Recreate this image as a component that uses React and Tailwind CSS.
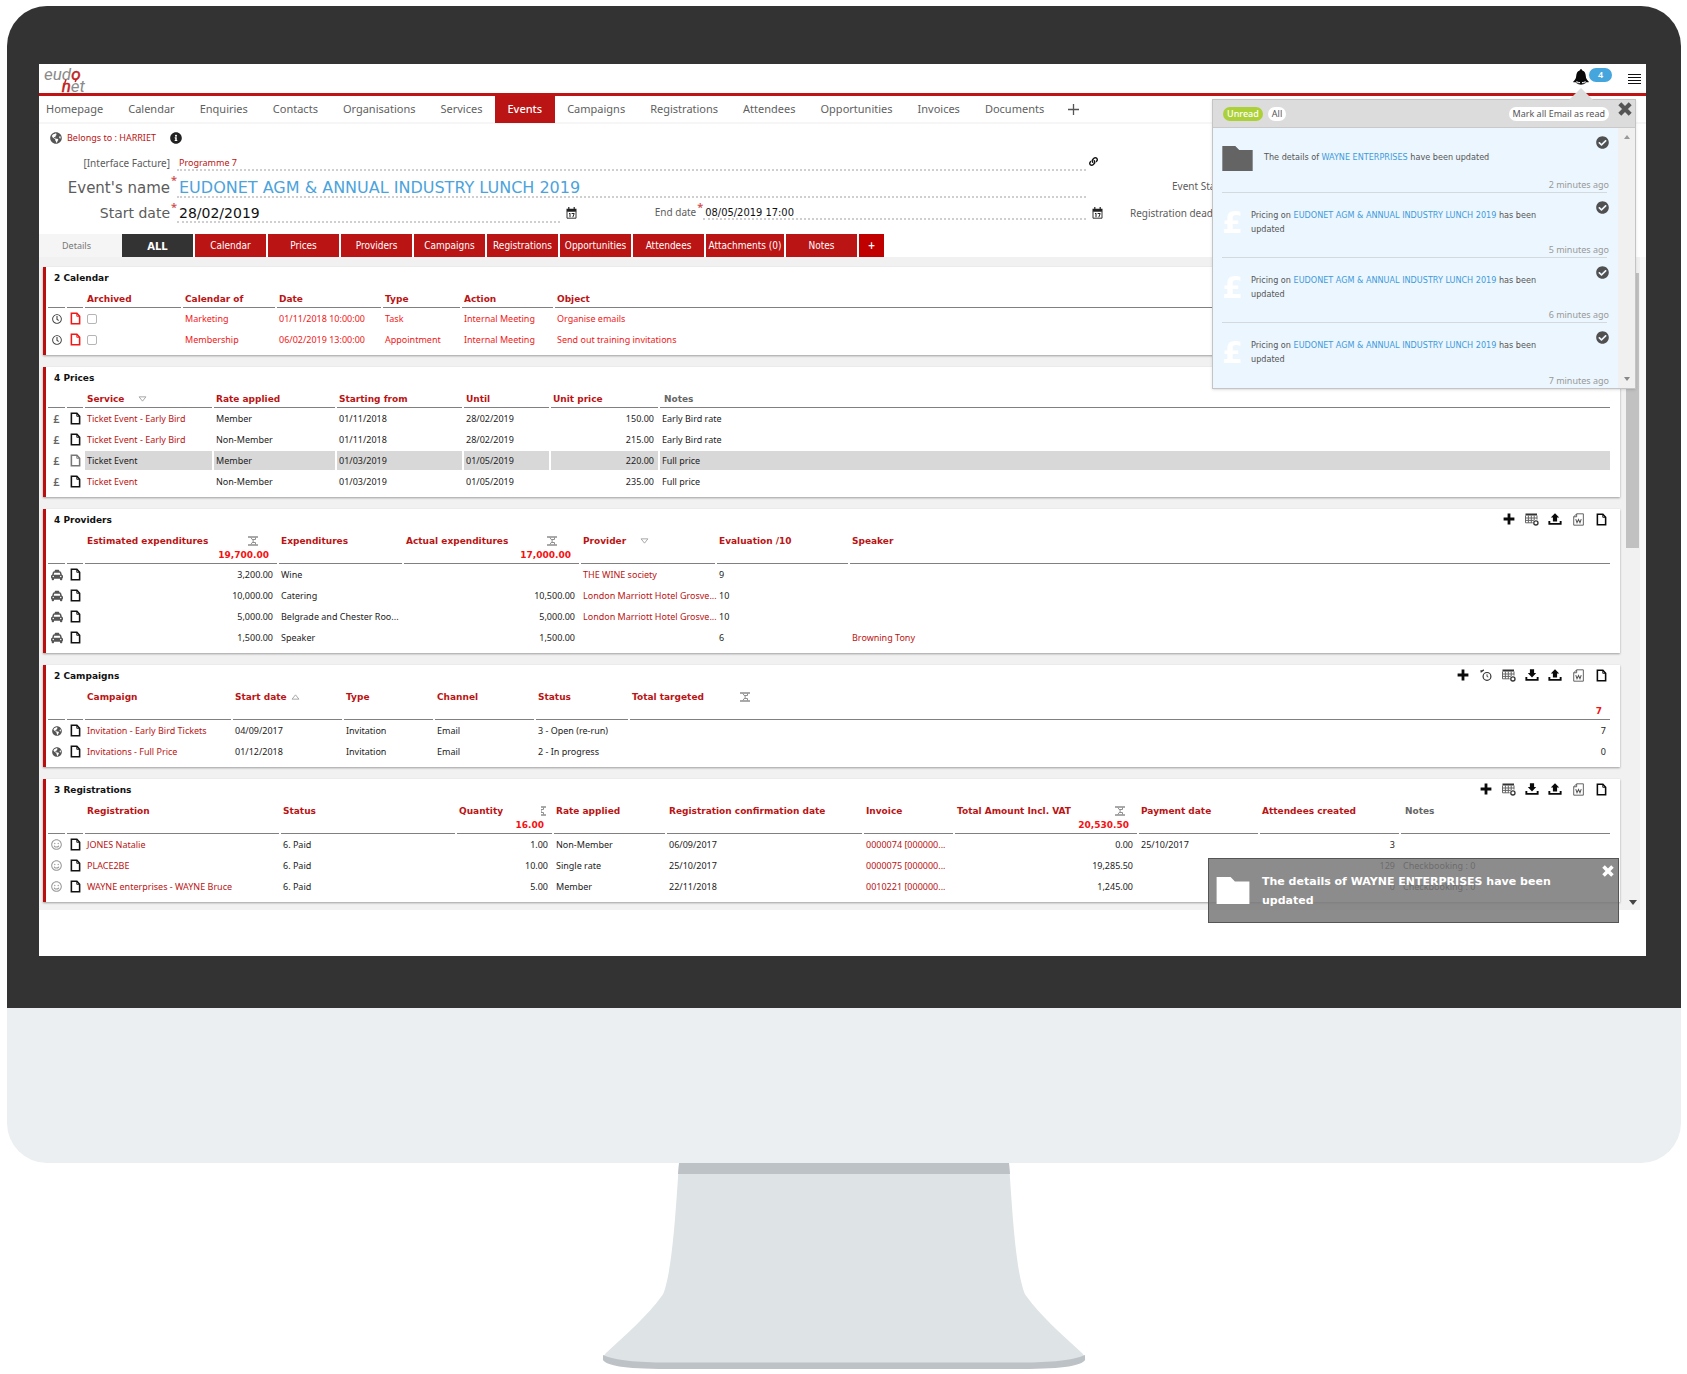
import React from "react";
import { FaCheckCircle, FaGlobeAmericas, FaInfoCircle, FaLink, FaRegClock, FaRegSmile, FaTaxi } from "react-icons/fa";

const BODY = "font-['Noto_Sans','DejaVu_Sans',sans-serif]";
const WIDE = "font-['DejaVu_Sans',sans-serif]";
const BOLD = "font-['DejaVu_Sans',sans-serif] font-bold";
const COND = "font-['DejaVu_Sans_Condensed','DejaVu_Sans',sans-serif]";

/* ---------- icons ---------- */

function FileIcon({ className = "" }) {
  return (
    <svg viewBox="0 0 12 14" className={"h-[13px] w-[11px] " + className} fill="none" stroke="currentColor" strokeWidth="1.7" aria-hidden="true">
      <path d="M1.5 1.2h6l3 3.4v8.2h-9z" />
      <path d="M7.4 1.2v3.4h3.1" strokeWidth="1" />
    </svg>
  );
}

function WordIcon() {
  return (
    <svg viewBox="0 0 12 14" className="h-[13px] w-[11px]" fill="none" stroke="#555" strokeWidth="1" aria-hidden="true">
      <path d="M4 .8h7.3v12.4H.8V4zM4 .8V4H.8" />
      <path d="M3 6.5l1.4 4L6 7l1.6 3.5L9 6.5" strokeWidth="1.1" />
    </svg>
  );
}

function PlusIcon() {
  return (
    <svg viewBox="0 0 12 12" className="size-3" fill="#0a0a0a" aria-hidden="true">
      <path d="M4.6 0.6h2.8v4h4v2.8h-4v4H4.6v-4h-4V4.6h4z" />
    </svg>
  );
}

function TableAddIcon() {
  return (
    <svg viewBox="0 0 14 13" className="h-[13px] w-[14px]" aria-hidden="true">
      <path d="M.5.5h11.5v2H.5z" fill="#333" />
      <path d="M.5 2.5v7.3h7.2M12 2.5v4M.5 5h11.5M.5 7.4h8.3M3.4 2.5v7.3M6.3 2.5v7.3M9.2 2.5v4.5" stroke="#666" strokeWidth="1" fill="none" />
      <circle cx="10.9" cy="9.9" r="2.1" fill="#fff" stroke="#333" strokeWidth="1.3" />
    </svg>
  );
}

function TrayIcon({ up }) {
  return (
    <svg viewBox="0 0 14 12" className="h-3 w-[14px]" fill="#0a0a0a" aria-hidden="true">
      <path d="M.4 8h1.9v2h9.4V8h1.9v3.8H.4z" />
      {up ? <path d="M7 .3l4.2 4.3H9.1v4H4.9v-4H2.8z" /> : <path d="M4.9.2h4.2v3.9h2.1L7 8.6 2.8 4.1h2.1z" />}
    </svg>
  );
}

function TimerIcon() {
  return (
    <svg viewBox="0 0 12 12" className="size-3" fill="none" stroke="#333" aria-hidden="true">
      <circle cx="7" cy="7.4" r="3.9" strokeWidth="1.2" />
      <path d="M7 5.3V7.5l1.3.5" strokeWidth="0.9" />
      <path d="M.6 3.2L3.8.9M.8 1.2l.9 1.6" strokeWidth="1.3" />
    </svg>
  );
}

function DateIcon() {
  return (
    <svg viewBox="0 0 11 12" className="h-3 w-[11px] shrink-0" aria-hidden="true">
      <path d="M.5 1.8h10v3H.5z" fill="#222" />
      <path d="M2.8 0v2.4M8.2 0v2.4" stroke="#222" strokeWidth="1.2" />
      <path d="M1 4.5v6.7h9V4.5" fill="none" stroke="#333" strokeWidth="1" />
      <path d="M3 6.8l1-.6v4M5.6 6.5h2.6L6.8 10.2" fill="none" stroke="#222" strokeWidth="1" />
    </svg>
  );
}

function FolderIcon({ className }) {
  return (
    <svg viewBox="0 0 34 28" className={className} fill="currentColor" aria-hidden="true">
      <path d="M0 0h14.5l4.5 4.6H34V28H0z" />
    </svg>
  );
}

function BellIcon() {
  return (
    <svg viewBox="0 0 16 16" className="mt-px size-4" aria-hidden="true">
      <path d="M8 .3c.8 0 1.2.5 1.3 1.1C11.8 2 12.6 4.2 12.8 7c.2 2.6 1 3.6 2.9 5.4v.9H.3v-.9C2.2 10.6 3 9.6 3.2 7c.2-2.8 1-5 3.5-5.6C6.8.8 7.200.3 8 .3z" fill="#0a0a0a" />
      <path d="M2.6 13.3c1.2 1.6 3 2.4 5.400 2.400s4.200-.8 5.400-2.400z" fill="#333" />
      <path d="M3.3 12.700c3 1.300 6.400 1.300 9.400 0" stroke="#fff" strokeWidth="1" fill="none" />
      <circle cx="8" cy="14" r="1.2" fill="#0a0a0a" />
    </svg>
  );
}

function CrossIcon({ className }) {
  return (
    <svg viewBox="0 0 14 14" className={className} stroke="currentColor" strokeWidth="4.2" aria-hidden="true">
      <path d="M1.8 1.8l10.4 10.4M12.2 1.8L1.8 12.2" />
    </svg>
  );
}

function SumIcon({ half }) {
  return (
    <svg viewBox={half ? "5 0 5 10" : "0 0 10 10"} className={half ? "mb-px h-[10px] w-[5px]" : "mb-px size-[10px]"} fill="none" stroke="#8f8f8f" aria-hidden="true">
      <path d="M0 1h10M0 9h10" strokeWidth="1.5" />
      <path d="M2.8 1.500l2.700 3.500-2.700 3.500M7.500 1.500v2M7.500 6.500v2M4.300 3.500h3.200M4.300 6.500h3.200" strokeWidth="1" />
    </svg>
  );
}

function Triangle({ up }) {
  return (
    <svg viewBox="0 0 10 7" className="mb-px h-[6px] w-[9px]" fill="none" stroke="#9a9a9a" strokeWidth="1" aria-hidden="true">
      {up ? <path d="M1 6h8L5 1z" /> : <path d="M1 1h8L5 6z" />}
    </svg>
  );
}

function Logo() {
  return (
    <svg viewBox="0 0 44 29" className="h-[29px] w-[44px] overflow-visible" role="img" aria-label="eudonet">
      <g fontFamily="Liberation Sans Narrow, Roboto, sans-serif" fontStyle="italic" fontSize="17" fill="#8a8a8a">
        <text x="0" y="16">eud<tspan fill="#c2201c" stroke="#c2201c" strokeWidth="0.500">o</tspan></text>
        <text x="41" y="28" textAnchor="end"><tspan fill="#c2201c" stroke="#c2201c" strokeWidth="0.500">n</tspan>et</text>
      </g>
      <path d="M32.500 14.500l-1.300 3.500M22 15.500l-1.200 3.500" stroke="#c2201c" strokeWidth="1.500" />
    </svg>
  );
}

const TOOL_ICONS = {
  add: ["Add", <PlusIcon key="i" />],
  timer: ["Schedule", <TimerIcon key="i" />],
  table: ["Columns", <TableAddIcon key="i" />],
  down: ["Import", <TrayIcon key="i" />],
  up: ["Export", <TrayIcon key="i" up />],
  word: ["Mail merge", <WordIcon key="i" />],
  file: ["New file", <FileIcon key="i" className="text-[#0a0a0a]" />],
};

const ROW_ICONS = {
  clock: <FaRegClock className="mx-auto size-[10px] text-[#444]" />,
  pound: <span className="text-[11px] font-semibold text-[#666]">£</span>,
  taxi: <FaTaxi className="mx-auto size-[12px] text-[#555]" />,
  globe: <FaGlobeAmericas className="mx-auto size-[10px] text-[#555]" />,
  smile: <FaRegSmile className="mx-auto size-[11px] text-[#999]" />,
};

/* ---------- data ---------- */

const NAV = ["Homepage", "Calendar", "Enquiries", "Contacts", "Organisations", "Services", "Events", "Campaigns", "Registrations", "Attendees", "Opportunities", "Invoices", "Documents"];
const TABS = ["Calendar", "Prices", "Providers", "Campaigns", "Registrations", "Opportunities", "Attendees", "Attachments (0)", "Notes"];

const SECTIONS = [
  {
    title: "2 Calendar",
    icon: "clock",
    red: true,
    widths: [96, 92, 104, 77, 91, 0],
    cols: [{ t: "Archived" }, { t: "Calendar of" }, { t: "Date" }, { t: "Type" }, { t: "Action" }, { t: "Object" }],
    rows: [
      ["[]", "Marketing", "01/11/2018 10:00:00", "Task", "Internal Meeting", "Organise emails"],
      ["[]", "Membership", "06/02/2019 13:00:00", "Appointment", "Internal Meeting", "Send out training invitations"],
    ],
  },
  {
    title: "4 Prices",
    icon: "pound",
    widths: [127, 121, 125, 85, 107, 0],
    cols: [{ t: "Service", sort: "down" }, { t: "Rate applied" }, { t: "Starting from" }, { t: "Until" }, { t: "Unit price", right: true }, { t: "Notes", grey: true }],
    link: [0],
    selected: 2,
    rows: [
      ["Ticket Event - Early Bird", "Member", "01/11/2018", "28/02/2019", "150.00", "Early Bird rate"],
      ["Ticket Event - Early Bird", "Non-Member", "01/11/2018", "28/02/2019", "215.00", "Early Bird rate"],
      ["Ticket Event", "Member", "01/03/2019", "01/05/2019", "220.00", "Full price"],
      ["Ticket Event", "Non-Member", "01/03/2019", "01/05/2019", "235.00", "Full price"],
    ],
  },
  {
    title: "4 Providers",
    icon: "taxi",
    tall: true,
    tools: ["add", "table", "up", "word", "file"],
    widths: [192, 123, 175, 134, 131, 0],
    cols: [
      { t: "Estimated expenditures", right: true, sum: "19,700.00", pad: "justify-between pr-[17px]" }, { t: "Expenditures" },
      { t: "Actual expenditures", right: true, sum: "17,000.00", pad: "justify-between pr-[20px]" }, { t: "Provider", sort: "down" }, { t: "Evaluation /10" }, { t: "Speaker" },
    ],
    link: [3, 5],
    rows: [
      ["3,200.00", "Wine", "", "THE WINE society", "9", ""],
      ["10,000.00", "Catering", "10,500.00", "London Marriott Hotel Grosve...", "10", ""],
      ["5,000.00", "Belgrade and Chester Roo...", "5,000.00", "London Marriott Hotel Grosve...", "10", ""],
      ["1,500.00", "Speaker", "1,500.00", "", "6", "Browning Tony"],
    ],
  },
  {
    title: "2 Campaigns",
    icon: "globe",
    tall: true,
    tools: ["add", "timer", "table", "down", "up", "word", "file"],
    widths: [146, 109, 89, 99, 92, 0],
    cols: [{ t: "Campaign" }, { t: "Start date", sort: "up" }, { t: "Type" }, { t: "Channel" }, { t: "Status" }, { t: "Total targeted", right: true, sum: "7", pad: "gap-9" }],
    link: [0],
    rows: [
      ["Invitation - Early Bird Tickets", "04/09/2017", "Invitation", "Email", "3 - Open (re-run)", "7"],
      ["Invitations - Full Price", "01/12/2018", "Invitation", "Email", "2 - In progress", "0"],
    ],
  },
  {
    title: "3 Registrations",
    icon: "smile",
    tall: true,
    tools: ["add", "table", "down", "up", "word", "file"],
    widths: [194, 174, 95, 111, 195, 89, 182, 119, 139, 0],
    cols: [
      { t: "Registration" }, { t: "Status" }, { t: "Quantity", right: true, sum: "16.00", half: true, pad: "justify-between pr-[4px]" }, { t: "Rate applied" }, { t: "Registration confirmation date" }, { t: "Invoice" },
      { t: "Total Amount Incl. VAT", right: true, sum: "20,530.50", pad: "justify-between pr-[10px]" }, { t: "Payment date" }, { t: "Attendees created", right: true }, { t: "Notes", grey: true },
    ],
    link: [0, 5],
    rows: [
      ["JONES Natalie", "6. Paid", "1.00", "Non-Member", "06/09/2017", "0000074 [000000...", "0.00", "25/10/2017", "3", ""],
      ["PLACE2BE", "6. Paid", "10.00", "Single rate", "25/10/2017", "0000075 [000000...", "19,285.50", "", "129", "Checkbooking : 0"],
      ["WAYNE enterprises - WAYNE Bruce", "6. Paid", "5.00", "Member", "22/11/2018", "0010221 [000000...", "1,245.00", "", "0", "Checkbooking : 0"],
    ],
  },
];

/* ---------- record lists ---------- */

function HeaderCell({ col, tall }) {
  return (
    <th scope="col" className={"border-b border-[#808080] px-[2px] py-0 text-left align-bottom " + (tall ? "h-[33px]" : "h-[19px]")}>
      <div className={"flex h-[16px] items-center pt-px text-[9px] leading-[15px] whitespace-nowrap " + BOLD + (col.grey ? " pl-[2px] text-[#666]" : " text-[#ba1414]") + (col.pad ? " " + col.pad : "")}>
        <span>{col.t}</span>
        {col.sort && <span className={col.sort === "up" ? "ml-1" : "ml-[14px]"}><Triangle up={col.sort === "up"} /></span>}
        {col.sum && <SumIcon half={col.half} />}
      </div>
      {tall && <div className={"h-[14px] pr-[6px] text-right text-[9px] leading-[13px] text-[#f81010] " + BOLD}>{col.sum}</div>}
    </th>
  );
}

function Cell({ section, row, col, value }) {
  const selected = section.selected === row;
  const isLink = section.link && section.link.includes(col) && value !== "";
  const color = section.red ? "text-[#f01818]" : isLink && !selected ? "text-[#ba1414]" : "text-[#222]";
  return (
    <td className={"border-y border-transparent bg-clip-padding py-0 pl-[2px] whitespace-nowrap " + color + (selected ? " bg-[#d8d8d8]" : "") + (section.cols[col].right ? " pr-[4px] text-right" : " pr-0")}>
      {value === "[]" ? <input type="checkbox" aria-label="Archived" className="block size-[10px] appearance-none rounded-[2px] border border-[#b5b5b5] bg-white" /> : isLink ? <a href="#record">{value}</a> : value}
    </td>
  );
}

function Section({ section }) {
  return (
    <section className="border-l-[3px] border-[#ba0f0f] bg-white pb-[5px] shadow-[0_1px_2px_rgba(0,0,0,0.35)]">
      <div className="flex h-[22px] items-center justify-between pr-3 pl-2">
        <h2 className={"pt-[2px] text-[9px] text-[#111] " + BOLD}>{section.title}</h2>
        {section.tools && (
          <div className="flex gap-[9px] pb-[2px]">
            {section.tools.map((t) => (
              <button key={t} type="button" aria-label={TOOL_ICONS[t][0]} className="flex h-[14px] w-[14px] items-center justify-center">{TOOL_ICONS[t][1]}</button>
            ))}
          </div>
        )}
      </div>
      <div className="pr-2">
        <table className="w-full table-fixed border-separate border-spacing-x-[2px] border-spacing-y-0 text-[9px] leading-[19px]">
          <colgroup>
            <col className="w-[17px]" />
            <col className="w-[16px]" />
            {section.widths.map((w, i) => <col key={i} style={w ? { width: w } : undefined} />)}
          </colgroup>
          <thead>
            <tr>
              <td className="border-b border-[#808080]" />
              <td className="border-b border-[#808080]" />
              {section.cols.map((c, i) => <HeaderCell key={i} col={c} tall={section.tall} />)}
            </tr>
          </thead>
          <tbody>
            {section.rows.map((r, ri) => (
              <tr key={ri} className="h-[21px]">
                <td className="p-0 text-center">{ROW_ICONS[section.icon]}</td>
                <td className="p-0">
                  <FileIcon className={"mx-auto " + (section.red ? "text-[#f01818]" : section.selected === ri ? "text-[#777]" : "text-[#111]")} />
                </td>
                {r.map((v, ci) => <Cell key={ci} section={section} row={ri} col={ci} value={v} />)}
              </tr>
            ))}
          </tbody>
        </table>
      </div>
    </section>
  );
}

/* ---------- header form ---------- */

function Star() {
  return <span className="w-[7px] shrink-0 self-start pt-[3px] pl-px text-[11px] leading-3 font-semibold text-[#d05050]">*</span>;
}

const DOTTED = "border-b-2 border-dotted border-[#cfcfcf] bg-transparent pl-[2px] outline-none";

function EventForm() {
  return (
    <div className="flex text-[#5c5c5c]">
      <form className="min-w-0 flex-1">
        <div className="flex h-[20px] items-end">
          <label htmlFor="iface" className="w-[131px] shrink-0 text-right text-[10px] leading-[16px]">[Interface Facture]</label>
          <span className="w-[7px] shrink-0" />
          <input id="iface" readOnly defaultValue="Programme 7" className={"h-[18px] min-w-0 flex-1 pt-[3px] text-[9px] text-[#ba1414] " + DOTTED} />
          <button type="button" aria-label="Linked record" className="flex w-[23px] justify-start self-center pl-[3px] text-[#111]"><FaLink className="size-[9px]" /></button>
        </div>
        <div className="flex h-[27px] items-end">
          <label htmlFor="ename" className={"w-[131px] shrink-0 text-right text-[15px] leading-[20px] " + WIDE}>Event&apos;s name</label>
          <Star />
          <input id="ename" readOnly defaultValue="EUDONET AGM & ANNUAL INDUSTRY LUNCH 2019" className={"h-[23px] min-w-0 flex-1 pt-[4px] text-[16px] leading-[17px] text-[#4ba3dc] " + WIDE + " " + DOTTED} />
          <span className="w-[23px]" />
        </div>
        <div className="flex h-[25px] items-end">
          <label htmlFor="sdate" className={"w-[131px] shrink-0 text-right text-[14px] leading-[20px] " + WIDE}>Start date</label>
          <Star />
          <input id="sdate" readOnly defaultValue="28/02/2019" className={"h-[22px] min-w-0 flex-1 pt-[4px] text-[14px] leading-[16px] text-[#111] " + WIDE + " " + DOTTED} />
          <button type="button" aria-label="Pick start date" className="ml-[6px] self-center pt-[4px]"><DateIcon /></button>
          <label htmlFor="edate" className="ml-[78px] self-center pt-[3px] text-[10px]">End date</label>
          <Star />
          <input id="edate" readOnly defaultValue="08/05/2019 17:00" className={"mb-[3px] h-[17px] min-w-0 flex-1 pt-[4px] text-[11px] leading-[11px] text-[#111] " + COND + " " + DOTTED} />
          <button type="button" aria-label="Pick end date" className="ml-[6px] self-center pt-[4px]"><DateIcon /></button>
          <span className="w-[6px]" />
        </div>
      </form>
      <div className="w-[537px] shrink-0 text-[10px]">
        <div className="h-[20px]" />
        <div className="flex h-[27px] w-[121px] items-center justify-end pt-1"><span>Event Status</span></div>
        <div className="flex h-[25px] w-[121px] items-center justify-end pt-[6px] whitespace-nowrap"><span>Registration deadline</span></div>
      </div>
    </div>
  );
}

/* ---------- overlays ---------- */

const NOTES = [
  { folder: true, a: "The details of", link: "WAYNE ENTERPRISES", b: "have been updated", ago: "2 minutes ago" },
  { a: "Pricing on", link: "EUDONET AGM & ANNUAL INDUSTRY LUNCH 2019", b: "has been updated", ago: "5 minutes ago" },
  { a: "Pricing on", link: "EUDONET AGM & ANNUAL INDUSTRY LUNCH 2019", b: "has been updated", ago: "6 minutes ago" },
  { a: "Pricing on", link: "EUDONET AGM & ANNUAL INDUSTRY LUNCH 2019", b: "has been updated", ago: "7 minutes ago" },
];

function NotificationPanel() {
  return (
    <aside aria-label="Notifications" className="absolute top-[35px] right-[10px] w-[424px] border border-[#c4c4c4] bg-[#ecf6fe] text-[9px] text-[#555] shadow-sm">
      <span className="absolute -top-3 right-[42px] h-3 w-6 bg-[#dcdcdc] [clip-path:polygon(50%_0,100%_100%,0_100%)]" />
      <div className="flex h-[28px] items-center border-b border-[#c9c9c9] bg-[#dcdcdc] pr-[3px] pl-[10px]">
        <button type="button" className="h-[14px] rounded-full bg-[#acd038] px-[4px] text-[9px] leading-[13px] font-medium text-white">Unread</button>
        <button type="button" className="ml-[5px] h-[14px] rounded-full bg-white px-[4px] text-[9px] leading-[13px]">All</button>
        <button type="button" className="ml-auto h-[14px] rounded-full bg-white px-[4px] text-[9px] leading-[13px]">Mark all Email as read</button>
        <button type="button" aria-label="Close notifications" className="ml-[9px] self-start pt-[2px] text-[#555]"><CrossIcon className="size-[14px]" /></button>
      </div>
      <div className="flex">
        <ul className="flex-1">
          {NOTES.map((n, i) => (
            <li key={i} className={"mr-[11px] ml-[9px] flex h-[65px] items-start " + (i < 3 ? "border-b border-[#d3d9dd]" : "")}>
              {n.folder ? (
                <FolderIcon className="mt-[18px] h-[25px] w-[31px] shrink-0 text-[#646464]" />
              ) : (
                <span className={"mt-[14px] w-[18px] shrink-0 text-[30px] leading-[32px] text-white " + BOLD}>£</span>
              )}
              <p className={"min-w-0 flex-1 text-[9px] leading-[14px] " + COND + (n.folder ? " mt-[22px] ml-[11px]" : " mt-[15px] ml-[11px]")}>
                {n.a} <a href="#record" className="text-[#3d9bdc]">{n.link}</a> {n.b}
              </p>
              <div className="-mr-[2px] flex h-full w-[64px] shrink-0 flex-col items-end justify-between pt-[8px] pb-[1px]">
                <button type="button" aria-label="Mark as read"><FaCheckCircle className="size-[13px] text-[#505050]" /></button>
                <span className="text-[9px] leading-[12px] text-[#999]">{n.ago}</span>
              </div>
            </li>
          ))}
        </ul>
        <div className="flex w-[17px] flex-col items-center justify-between bg-[#f0f0f0] py-[7px]">
          <span className="border-x-[3px] border-b-[4px] border-x-transparent border-b-[#999]" />
          <span className="border-x-[3px] border-t-[4px] border-x-transparent border-t-[#888]" />
        </div>
      </div>
    </aside>
  );
}

function Toast() {
  return (
    <div role="status" className="absolute right-[27px] bottom-[33px] flex h-[65px] w-[411px] items-start border border-[#555] bg-[#787878]/85 text-white">
      <FolderIcon className="mt-[18px] ml-[7px] h-[27px] w-[34px] shrink-0" />
      <p className={"mt-[13px] ml-[12px] w-[300px] text-[11px] leading-[19px] " + BOLD}>The details of WAYNE ENTERPRISES have been updated</p>
      <button type="button" aria-label="Dismiss" className="mt-[6px] mr-[4px] ml-auto"><CrossIcon className="size-3" /></button>
    </div>
  );
}

/* ---------- application ---------- */

function Screen() {
  return (
    <div className={"relative bg-white pb-[46px] " + BODY}>
      <header className="flex h-[32px] items-center border-b-[3px] border-[#c01414] pr-[5px] pl-[5px]">
        <Logo />
        <button type="button" aria-label="Notifications, 4 unread" className="mb-1 ml-auto flex items-start text-black">
          <BellIcon />
          <span className="h-[14px] w-[23px] rounded-full bg-[#45a5dd] text-center text-[9px] leading-[14px] font-semibold text-white">4</span>
        </button>
        <button type="button" aria-label="Menu" className="ml-[16px] flex w-[13px] flex-col gap-[2px]">
          <span className="h-px bg-[#111]" />
          <span className="h-px bg-[#111]" />
          <span className="h-px bg-[#111]" />
          <span className="h-px bg-[#111]" />
        </button>
      </header>

      <nav className="flex h-[28px] items-start border-b-2 border-[#f6f6f6] pr-[5px] text-[11px] text-[#5f5f5f]">
        {NAV.map((n, i) => (
          <a key={n} href={"#" + n.toLowerCase()} className={"flex h-[27px] items-center pr-[13px] " + (i === 0 ? "pl-[7px]" : "pl-3") + (n === "Events" ? " bg-[#ba1414] font-medium text-white" : "")}>{n}</a>
        ))}
        <button type="button" aria-label="Add tab" className="ml-[11px] h-[27px] text-[#555]">
          <svg viewBox="0 0 11 11" className="size-[11px]" stroke="currentColor" strokeWidth="1.3"><path d="M5.5 0v11M0 5.5h11" /></svg>
        </button>
      </nav>

      <div className="flex h-[27px] items-center pl-[11px]">
        <FaGlobeAmericas className="size-3 text-[#555]" />
        <a href="#owner" className="ml-[5px] text-[9px] text-[#ba1414]">Belongs to : HARRIET</a>
        <FaInfoCircle className="ml-[14px] size-3 text-[#222]" />
      </div>

      <EventForm />

      <div className="mt-[11px] flex h-[23px] items-stretch text-[10px]">
        <button type="button" className="w-[83px] bg-[#f5f5f5] pr-2 text-[9px] text-[#777]">Details</button>
        <div className={"flex flex-1 gap-[2px] bg-white text-white " + COND}>
          <button type="button" className={"w-[71px] bg-[#333] pt-[2px] text-[10px] " + BOLD}>ALL</button>
          {TABS.map((t) => (
            <button key={t} type="button" className={"bg-[#ba1414] font-medium whitespace-nowrap " + (t.length > 13 ? "w-[78px]" : "w-[71px]")}>{t}</button>
          ))}
          <button type="button" aria-label="Add tab" className="w-[25px] bg-[#c00000] font-bold">+</button>
        </div>
      </div>

      <div className="flex bg-[#f1f1f1]">
        <main className="flex min-w-0 flex-1 flex-col gap-3 pt-[10px] pb-2 pl-1">
          {SECTIONS.map((s) => <Section key={s.title} section={s} />)}
        </main>
        <div className="ml-[6px] flex w-[13px] flex-col items-center justify-between pt-[16px] pb-[5px]">
          <span className="h-[275px] w-full bg-[#c1c1c1]" />
          <span className="border-x-[4px] border-t-[5px] border-x-transparent border-t-[#444]" />
        </div>
        <div className="ml-[1px] w-[6px] bg-[#f9f9f9]" />
      </div>

      <NotificationPanel />
      <Toast />
    </div>
  );
}

export default function App() {
  return (
    <div className="bg-white pt-[6px] pr-[6px] pl-[7px]">
      <div className="overflow-hidden rounded-[40px] bg-[#ebeff1]">
        <div className="bg-[#333] pt-[58px] pr-[35px] pb-[52px] pl-8">
          <Screen />
        </div>
        <div className="h-[155px]" />
      </div>
      <svg viewBox="0 0 484 207" className="mx-auto block h-[207px] w-[484px]" aria-hidden="true">
        <path d="M77 0H407C410 45 413 96 420 122Q422 131 425 134C438 152 458 170 480 190Q484 194 483 197C470 201 450 203 420 203H64C34 203 14 201 1 197Q0 194 4 190C26 170 46 152 59 134Q62 131 64 122C71 96 74 45 77 0z" fill="#dee3e6" />
        <path d="M77 0h330l1 11H76z" fill="#bdc2c7" />
        <path d="M1 192v5C4 202 20 206 65 206H419C464 206 480 202 483 197v-5C470 197.5 450 199.5 419 199.5H65C34 199.5 14 197.5 1 192z" fill="#bdc2c7" />
      </svg>
    </div>
  );
}
